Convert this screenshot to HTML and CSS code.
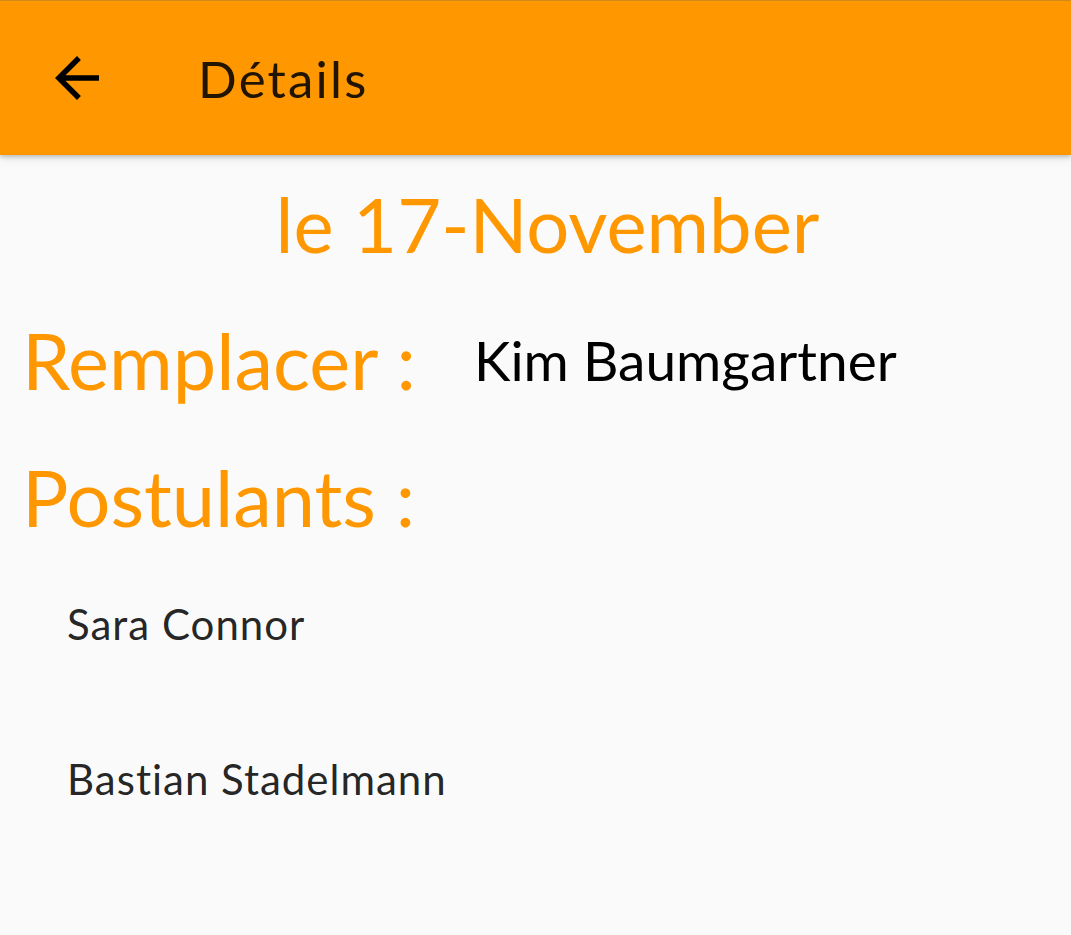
FILE: index.html
```html
<!DOCTYPE html>
<html lang="fr">
<head>
<meta charset="utf-8">
<title>Détails</title>
<link rel="stylesheet" href="styles.css">
</head>
<body>
<header class="appbar">
  <button class="back" aria-label="Retour">
    <svg viewBox="0 0 24 24" width="66" height="66"><path d="M20 11H7.83l5.59-5.59L12 4l-8 8 8 8 1.41-1.41L7.83 13H20v-2z" fill="#000"/></svg>
  </button>
  <h1 class="title">Détails</h1>
</header>
<main class="content">
  <div class="date">le 17-November</div>
  <div class="row">
    <span class="label">Remplacer :</span>
    <span class="value">Kim Baumgartner</span>
  </div>
  <div class="row">
    <span class="label">Postulants :</span>
  </div>
  <ul class="list">
    <li class="item">Sara Connor</li>
    <li class="item">Bastian Stadelmann</li>
  </ul>
</main>
</body>
</html>
```

FILE: styles.css
```css
* { box-sizing: border-box; }
html, body { margin: 0; padding: 0; }
body {
  background: #fafafa;
  font-family: Lato, "Noto Sans", sans-serif;
  font-variant-ligatures: none;
  width: 1071px;
  height: 935px;
  overflow: hidden;
}
.appbar {
  height: 155px;
  background: #ff9800;
  border-top: 1px solid #d08a1a;
  display: flex;
  align-items: center;
  box-shadow: 0 2px 4px rgba(0,0,0,0.2), 0 4px 10px rgba(0,0,0,0.08);
  position: relative;
  z-index: 1;
}
.back {
  margin: 0 0 0 44px;
  padding: 0;
  border: 0;
  background: none;
  width: 66px;
  height: 66px;
  display: flex;
}
.title {
  margin: 2px 0 0 88px;
  font-size: 51px;
  font-weight: 400;
  line-height: 1.2;
  letter-spacing: 2.2px;
  color: rgba(0,0,0,0.87);
}
.content {
  display: flex;
  flex-direction: column;
  padding: 23px 0 0 0;
}
.date {
  text-align: center;
  color: #ff9800;
  font-size: 76px;
  line-height: 1.2;
  padding-left: 24px;
}
.row {
  display: flex;
  align-items: center;
  margin-top: 44.5px;
  padding-left: 22px;
}
.label {
  color: #ff9800;
  font-size: 77.5px;
  line-height: 1.2;
}
.value {
  margin-left: 58px;
  color: #000;
  font-size: 55px;
  line-height: 1.2;
}
.list {
  list-style: none;
  margin: 54.5px 0 0 0;
  padding: 0 0 0 67px;
  display: flex;
  flex-direction: column;
  gap: 105px;
}
.item {
  font-size: 42px;
  line-height: 1.2;
  letter-spacing: 1px;
  color: rgba(0,0,0,0.87);
}
```
